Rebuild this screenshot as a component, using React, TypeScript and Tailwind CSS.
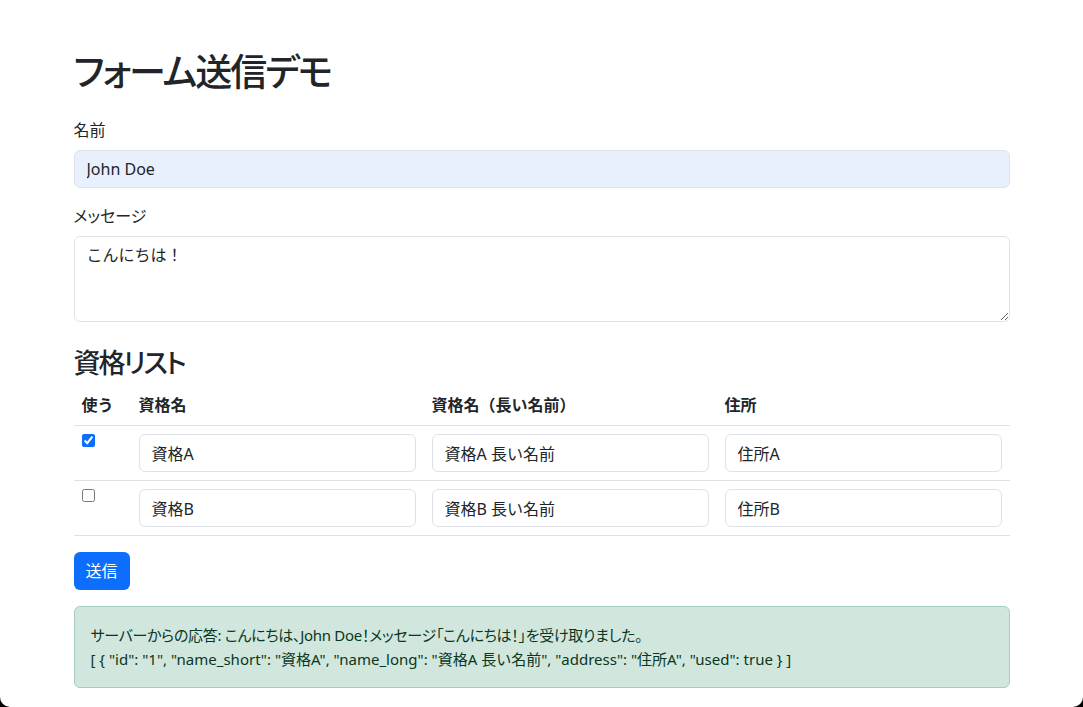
import { useState } from "react";

type Qualification = {
  id: string;
  name_short: string;
  name_long: string;
  address: string;
  used: boolean;
};

const initialRows: Qualification[] = [
  { id: "1", name_short: "資格A", name_long: "資格A 長い名前", address: "住所A", used: true },
  { id: "2", name_short: "資格B", name_long: "資格B 長い名前", address: "住所B", used: false },
];

const inputBase =
  "block w-full h-[38px] px-3 py-[6px] text-[16px] leading-6 text-[#212529] border border-[#dee2e6] rounded-[6px] outline-none [font-feature-settings:normal]";

export default function App() {
  const [name, setName] = useState("John Doe");
  const [message, setMessage] = useState("こんにちは！");
  const [rows, setRows] = useState(initialRows);

  const updateRow = (id: string, patch: Partial<Qualification>) => {
    setRows((prev) => prev.map((r) => (r.id === id ? { ...r, ...patch } : r)));
  };

  return (
    <div className="h-[707px] bg-black overflow-hidden">
      <div
        className="h-full bg-white rounded-b-[10px] text-[16px] leading-6 text-[#212529]"
        style={{ fontFamily: '"Noto Sans", "Noto Sans CJK JP", sans-serif' }}
      >
        <div className="w-[936px] mx-auto pt-[49px]">
          <h1 className="text-[37px] leading-[45px] font-medium mb-[24px] tracking-[-2px] [font-feature-settings:'palt']">
            フォーム送信デモ
          </h1>

          {/* Name */}
          <div className="mb-4">
            <label className="block mb-2">名前</label>
            <input
              className={inputBase + " bg-[#e8f0fe]"}
              value={name}
              onChange={(e) => setName(e.target.value)}
            />
          </div>

          {/* Message */}
          <div className="mb-4">
            <label className="block mb-2 [font-feature-settings:'palt']">メッセージ</label>
            <textarea
              rows={3}
              className="block w-full h-[86px] px-3 py-[6px] leading-6 bg-white border border-[#dee2e6] rounded-[6px] outline-none resize-y [font-feature-settings:normal]"
              value={message}
              onChange={(e) => setMessage(e.target.value)}
            />
          </div>

          <h3 className="mt-6 mb-[6px] text-[27px] leading-[33px] font-medium tracking-[-2px] [font-feature-settings:'palt']">
            資格リスト
          </h3>

          {/* Table */}
          <table className="w-full mb-4 border-collapse">
            <thead>
              <tr className="border-b border-[#dee2e6]">
                <th className="w-[57px] p-2 text-left font-bold">使う</th>
                <th className="w-[293px] p-2 text-left font-bold">資格名</th>
                <th className="w-[293px] p-2 text-left font-bold">資格名（長い名前）</th>
                <th className="p-2 text-left font-bold">住所</th>
              </tr>
            </thead>
            <tbody>
              {rows.map((row) => (
                <tr key={row.id} className="border-b border-[#dee2e6]">
                  <td className="p-2 align-top">
                    <input
                      type="checkbox"
                      className="block w-[13px] h-[13px] m-0 accent-[#0d6efd]"
                      checked={row.used}
                      onChange={(e) => updateRow(row.id, { used: e.target.checked })}
                    />
                  </td>
                  <td className="p-2">
                    <input
                      className={inputBase + " bg-white"}
                      value={row.name_short}
                      onChange={(e) => updateRow(row.id, { name_short: e.target.value })}
                    />
                  </td>
                  <td className="p-2">
                    <input
                      className={inputBase + " bg-white"}
                      value={row.name_long}
                      onChange={(e) => updateRow(row.id, { name_long: e.target.value })}
                    />
                  </td>
                  <td className="p-2">
                    <input
                      className={inputBase + " bg-white"}
                      value={row.address}
                      onChange={(e) => updateRow(row.id, { address: e.target.value })}
                    />
                  </td>
                </tr>
              ))}
            </tbody>
          </table>

          <button className="h-[38px] px-3 rounded-[6px] bg-[#0d6efd] text-white leading-6">送信</button>

          {/* Response */}
          <div className="mt-4 p-4 rounded-[6px] border border-[#a3cfbb] bg-[#d1e7dd] text-[#0a3622] text-[15px] leading-6">
            <div className="[font-feature-settings:'palt'] tracking-[-0.3px]">
              サーバーからの応答: こんにちは、{name}！メッセージ「{message}」を受け取りました。
            </div>
            <div>
              {'[ { "id": "1", "name_short": "資格A", "name_long": "資格A 長い名前", "address": "住所A", "used": true } ]'}
            </div>
          </div>
        </div>
      </div>
    </div>
  );
}
